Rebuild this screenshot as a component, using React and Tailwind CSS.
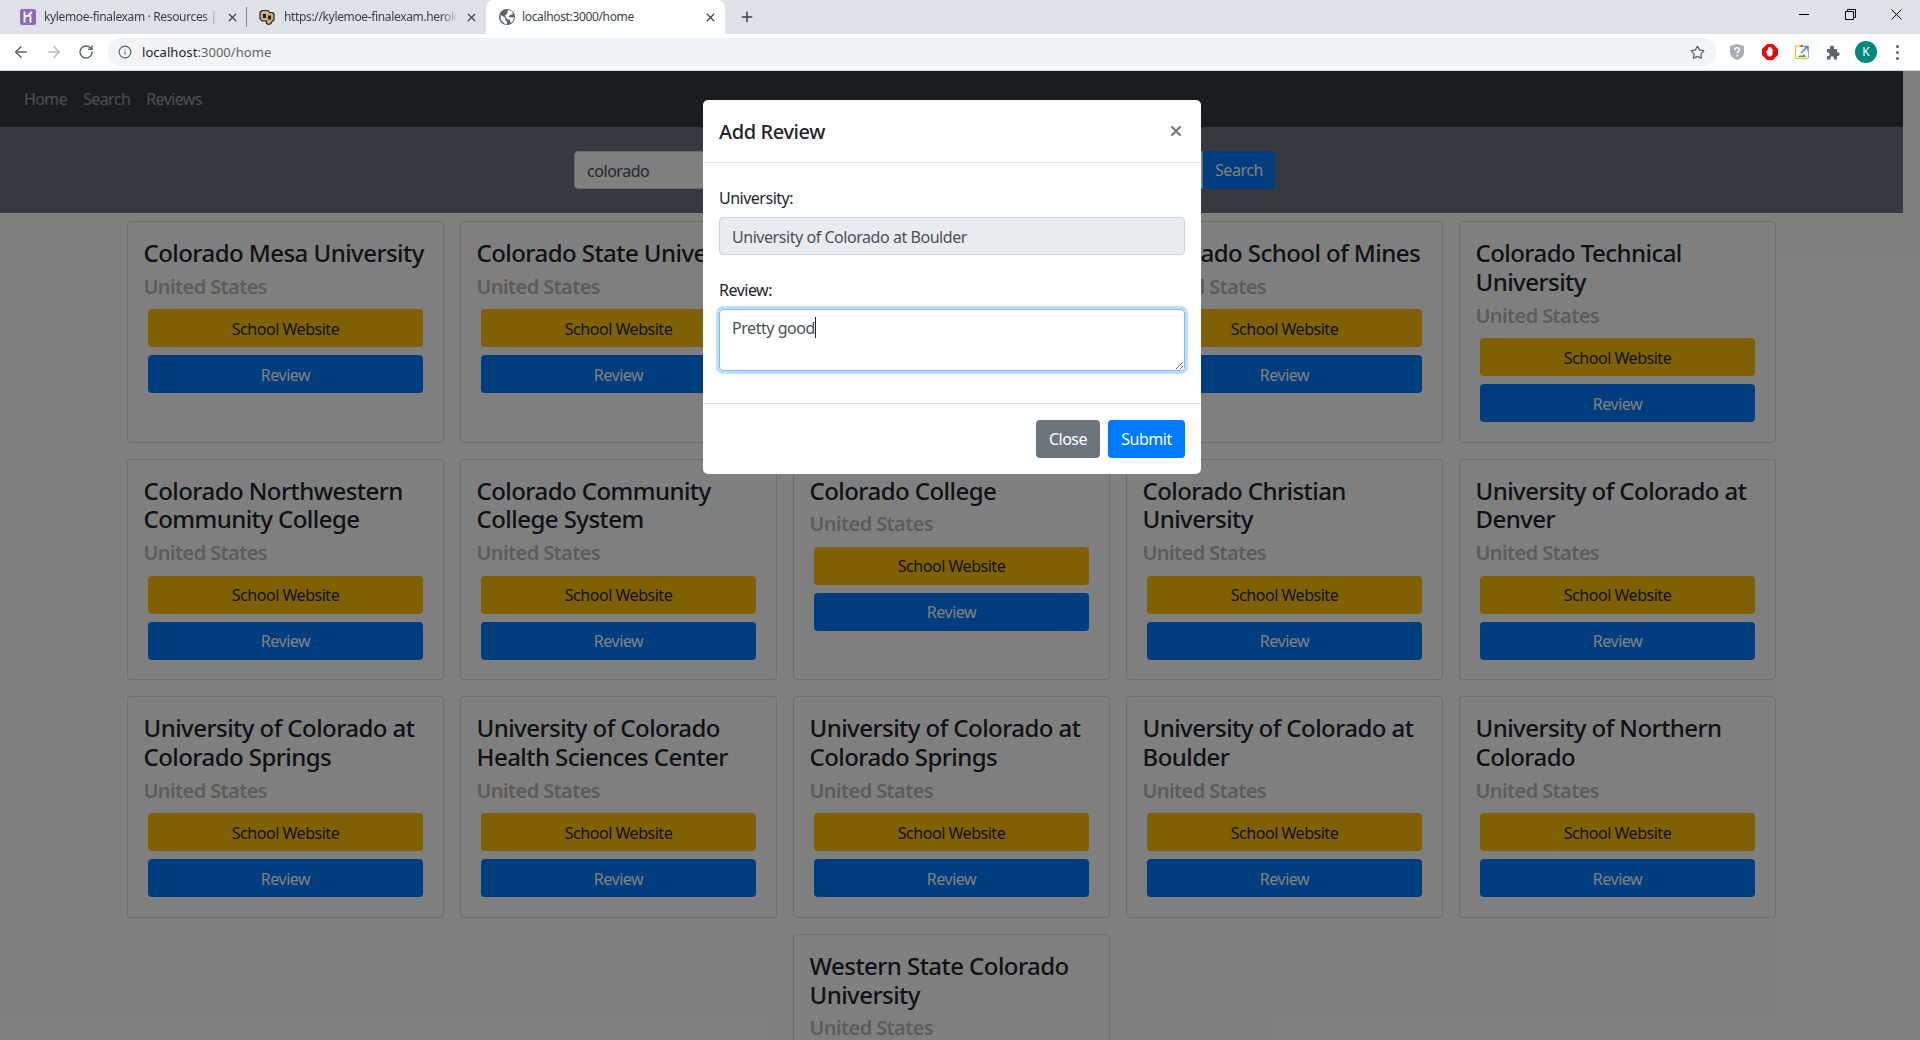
import { ArrowLeft, ArrowRight, RotateCw, Info, Star, X, Plus } from 'lucide-react'

const schools = [
  'Colorado Mesa University',
  'Colorado State University',
  'Colorado Mountain College',
  'Colorado School of Mines',
  'Colorado Technical University',
  'Colorado Northwestern Community College',
  'Colorado Community College System',
  'Colorado College',
  'Colorado Christian University',
  'University of Colorado at Denver',
  'University of Colorado at Colorado Springs',
  'University of Colorado Health Sciences Center',
  'University of Colorado at Colorado Springs',
  'University of Colorado at Boulder',
  'University of Northern Colorado',
  'Western State Colorado University',
]

function HerokuIcon() {
  return (
    <svg width="16" height="16" viewBox="0 0 16 16">
      <rect width="16" height="16" rx="2" fill="#8d6bb5" />
      <path d="M4.5 2.5v11M4.5 8c2-1 6-2.5 6 0v5.5M11.5 2.5c0 1.5-1 2.5-3 3" stroke="#fff" strokeWidth="1.8" fill="none" />
    </svg>
  )
}

function BuffaloIcon() {
  return (
    <svg width="16" height="16" viewBox="0 0 16 16">
      <path d="M1 3.5 3 1.5h6l1.5 2h3l1.5 1.5v6l-2 1.5-1 2-2.500 1-2-1v-2.500H3L1 9.500z" fill="#c9b27c" stroke="#222" strokeWidth="1.2" />
      <path d="M4 5h3v4H4zM9 6.500h3v4H9z" fill="#222" />
    </svg>
  )
}

function GlobeIcon() {
  return (
    <svg width="16" height="16" viewBox="0 0 16 16">
      <circle cx="8" cy="8" r="8" fill="#5f6368" />
      <path d="M1.500 6 6 8.500l.5 3 1.500 1v3l-2-.5-4-4zM9 1l4 1 1 3-3 1-1.500 2 4 .5 1.500-.5-1 4-2.500 2-.5-3-3-1L6 6.500l2-1.500z" fill="#fff" />
    </svg>
  )
}

function TabClose({ className }) {
  return <X size={13} strokeWidth={2.2} className={`shrink-0 text-[#3c4043] ${className}`} />
}

function BrowserChrome() {
  return (
    <div className="h-[71px] shrink-0 bg-white border-b border-[#d5d7da] font-['Noto_Sans',sans-serif]">
      <div className="h-[34px] bg-[#dee1e6] flex items-end text-[12px] text-[#3c4043] relative">
        <div className="w-[247px] h-[34px] flex items-center pl-[20px] relative">
          <HerokuIcon />
          <span className="ml-[8px] w-[176px] overflow-hidden whitespace-nowrap tracking-[-0.35px] [mask-image:linear-gradient(to_right,black_90%,transparent)]">kylemoe-finalexam · Resources | Heroku</span>
          <TabClose className="ml-[6px]" />
          <div className="absolute right-0 top-[7px] h-[20px] w-px bg-[#80868b]" />
        </div>
        <div className="w-[239px] h-[34px] flex items-center pl-[12px]">
          <BuffaloIcon />
          <span className="ml-[9px] w-[174px] overflow-hidden whitespace-nowrap tracking-[-0.35px] [mask-image:linear-gradient(to_right,black_90%,transparent)]">https://kylemoe-finalexam.herokuapp.com</span>
          <TabClose className="ml-[7px]" />
        </div>
        <div className="w-[239px] h-[34px] bg-white rounded-t-[8px] flex items-center pl-[13px]">
          <GlobeIcon />
          <span className="ml-[7px] w-[181px] whitespace-nowrap tracking-[-0.35px]">localhost:3000/home</span>
          <TabClose className="ml-[1px]" />
        </div>
        <Plus size={16} strokeWidth={2.2} className="ml-[14px] mb-[9px] text-[#3c4043]" />
        <div className="ml-auto h-[34px] flex items-start text-black">
          <svg width="10" height="11" viewBox="0 0 10 11" className="mt-[9px] mr-[36px]">
            <path d="M0 5.500h10" fill="none" stroke="#000" />
          </svg>
          <svg width="11" height="11" viewBox="0 0 11 11" className="mt-[9px] mr-[35px]">
            <path d="M.5 2.500h8v8h-8zM2.500 2.500v-2h8v8h-2" fill="none" stroke="#000" />
          </svg>
          <svg width="11" height="11" viewBox="0 0 11 11" className="mt-[9px] mr-[18px]">
            <path d="M.5.5l10 10M10.500.5l-10 10" stroke="#000" fill="none" />
          </svg>
        </div>
      </div>
      <div className="h-[36px] flex items-center">
        <ArrowLeft size={18} strokeWidth={2} className="ml-[12px] text-[#5f6368]" />
        <ArrowRight size={18} strokeWidth={2} className="ml-[15px] text-[#b8babd]" />
        <RotateCw size={16} strokeWidth={2.2} className="ml-[15px] text-[#5f6368]" />
        <div className="ml-[14px] w-[1608px] h-[28px] rounded-full bg-[#f1f3f4] flex items-center pl-[10px] pr-[11px]">
          <Info size={14} strokeWidth={2} className="text-[#5f6368]" />
          <span className="ml-[10px] pt-px text-[13px] text-[#202124] tracking-[0.05px]">localhost<span className="text-[#5f6368]">:3000/home</span></span>
          <Star size={15} strokeWidth={2} className="ml-auto text-[#5f6368]" />
        </div>
        <svg width="14" height="16" viewBox="0 0 14 16" className="ml-[14px]">
          <path d="M7 0 14 2v6c0 4-3 6.500-7 8-4-1.500-7-4-7-8V2z" fill="#a9aeb8" />
          <path d="M4.800 6c0-3 4.600-3 4.600 0 0 1.500-2 1.500-2 3M7.300 10.500v2" stroke="#fff" strokeWidth="1.600" fill="none" />
        </svg>
        <svg width="16" height="16" viewBox="0 0 16 16" className="ml-[18px]">
          <path d="M5 0h6l5 5v6l-5 5H5l-5-5V5z" fill="#e40c0c" />
          <path d="M5 6h1V3.500h1.200V3h1.200v.5h1.200V5h1V9c0 2-1 3.500-3 3.500S5.500 11.500 5 10L3.800 7.500 5 7.500z" fill="#fff" />
        </svg>
        <svg width="14" height="14" viewBox="0 0 14 14" className="ml-[17px]">
          <path d="M.5 13.500V1h7" fill="none" stroke="#fbbc05" />
          <path d="M8 1h-2.500" fill="none" stroke="#ea4335" strokeWidth="2" />
          <path d="M1 13.500h12" fill="none" stroke="#fbbc05" strokeWidth="1.500" />
          <path d="M13.500 13V6" fill="none" stroke="#8ab4f8" />
          <path d="M6 8l6-6M8.500 1.500H13V6" fill="none" stroke="#4285f4" strokeWidth="1.500" />
          <path d="M3 12l2-2 2 1 2-2 2 3z" fill="#34a853" />
        </svg>
        <svg width="15" height="15" viewBox="0 0 15 15" className="ml-[17px]">
          <path d="M1 4h3V2.500a2 2 0 0 1 4 0V4h3v3.200h1.300a2 2 0 0 1 0 3.800H11v3.500H7.800V13a1.700 1.700 0 0 0-3.400 0v1.500H1v-3.300h1.300a2 2 0 0 0 0-3.800H1z" fill="#5f6368" />
        </svg>
        <div className="ml-[14px] w-[22px] h-[22px] rounded-full bg-[#00897b] text-white text-[12px] flex items-center justify-center">K</div>
        <div className="ml-[19px] flex flex-col gap-[3px]">
          <div className="w-[3px] h-[3px] rounded-full bg-[#5f6368]" />
          <div className="w-[3px] h-[3px] rounded-full bg-[#5f6368]" />
          <div className="w-[3px] h-[3px] rounded-full bg-[#5f6368]" />
        </div>
      </div>
    </div>
  )
}

function SchoolCard({ name }) {
  return (
    <div className="w-[317px] border border-black/[.125] rounded-[4px] bg-white px-4 pt-[17px] pb-[15.5px]">
      <h4 className="text-[24px] leading-[28.8px] font-medium text-[#212529] mb-[7px] -ml-[0.5px] tracking-[-0.55px]">{name}</h4>
      <h5 className="text-[20px] leading-[24px] font-semibold text-[#b8b8b8] mb-[10.5px] -ml-[0.5px] tracking-[-0.6px]">United States</h5>
      <button className="block w-[275px] h-[38px] pt-px m-1 rounded-[4px] bg-[#ffc107] text-[#212529] text-[16px] tracking-[-0.47px]">School Website</button>
      <button className="block w-[275px] h-[38px] pt-px m-1 mt-2 rounded-[4px] bg-[#007bff] text-white text-[16px] tracking-[-0.47px]">Review</button>
    </div>
  )
}

function ReviewDialog() {
  return (
    <div className="absolute inset-0 z-10 bg-black/50">
      <div className="absolute left-[703px] top-[29px] w-[498px] bg-white rounded-[5px] text-[16px] leading-[24px] text-[#212529] tracking-[-0.5px]">
        <div className="h-[63px] border-b border-[#dee2e6] flex items-center justify-between pl-4 pr-[17px]">
          <h5 className="text-[20px] font-medium leading-[30px] pt-[2px] tracking-[-0.4px]">Add Review</h5>
          <X size={16} strokeWidth={3.4} className="text-[#7b7b7b]" />
        </div>
        <div className="p-4">
          <label className="block pt-[7px] mb-[7px]">University:</label>
          <div className="h-[38px] rounded-[4px] border border-[#ced4da] bg-[#e9ecef] px-3 pt-[7px] text-[#495057] tracking-[-0.45px] mb-[22px]">University of Colorado at Boulder</div>
          <label className="block pt-px mb-[7px]">Review:</label>
          <div className="relative mb-4">
            <textarea
              rows={2}
              readOnly
              value="Pretty good"
              className="block w-full h-[62px] rounded-[4px] border border-[#80bdff] px-3 pt-[6px] text-[#495057] tracking-[-0.45px] caret-transparent outline-none shadow-[0_0_0_3px_rgba(0,123,255,.25)]"
            />
            <div className="absolute left-[96px] top-[8px] w-px h-[21px] bg-[#212529]" />
          </div>
        </div>
        <div className="h-[71px] border-t border-[#dee2e6] flex items-center justify-end gap-2 pr-4">
          <button className="w-[64px] h-[38px] rounded-[4px] bg-[#6c757d] text-white">Close</button>
          <button className="w-[77px] h-[38px] rounded-[4px] bg-[#007bff] text-white">Submit</button>
        </div>
      </div>
    </div>
  )
}

export default function App() {
  return (
    <div className="h-[1040px] flex flex-col overflow-hidden bg-white font-['Noto_Sans',sans-serif]">
      <BrowserChrome />
      <div className="relative flex-1 overflow-hidden">
        <div className="w-[1903px]">
          <nav className="h-[56px] bg-[#343a40] flex items-center gap-4 pl-6 text-[16px] text-white/50 tracking-[-0.6px]">
            <a>Home</a>
            <a>Search</a>
            <a>Reviews</a>
          </nav>
          <div className="h-[86px] bg-[#6c757d] flex items-center pl-[574px]">
            <div className="w-[629px] h-[38px] rounded-l-[4px] bg-white border border-[#ced4da] px-3 pt-[7px] text-[16px] leading-[24px] text-[#495057] tracking-[-0.45px]">colorado</div>
            <button className="w-[72px] h-[38px] rounded-r-[4px] bg-[#007bff] text-white text-[16px] tracking-[-0.45px]">Search</button>
          </div>
          <div className="mx-[127px] mt-[8px] flex flex-wrap justify-center gap-4">
            {schools.map((name, i) => <SchoolCard key={i} name={name} />)}
          </div>
        </div>
        <ReviewDialog />
      </div>
    </div>
  )
}
